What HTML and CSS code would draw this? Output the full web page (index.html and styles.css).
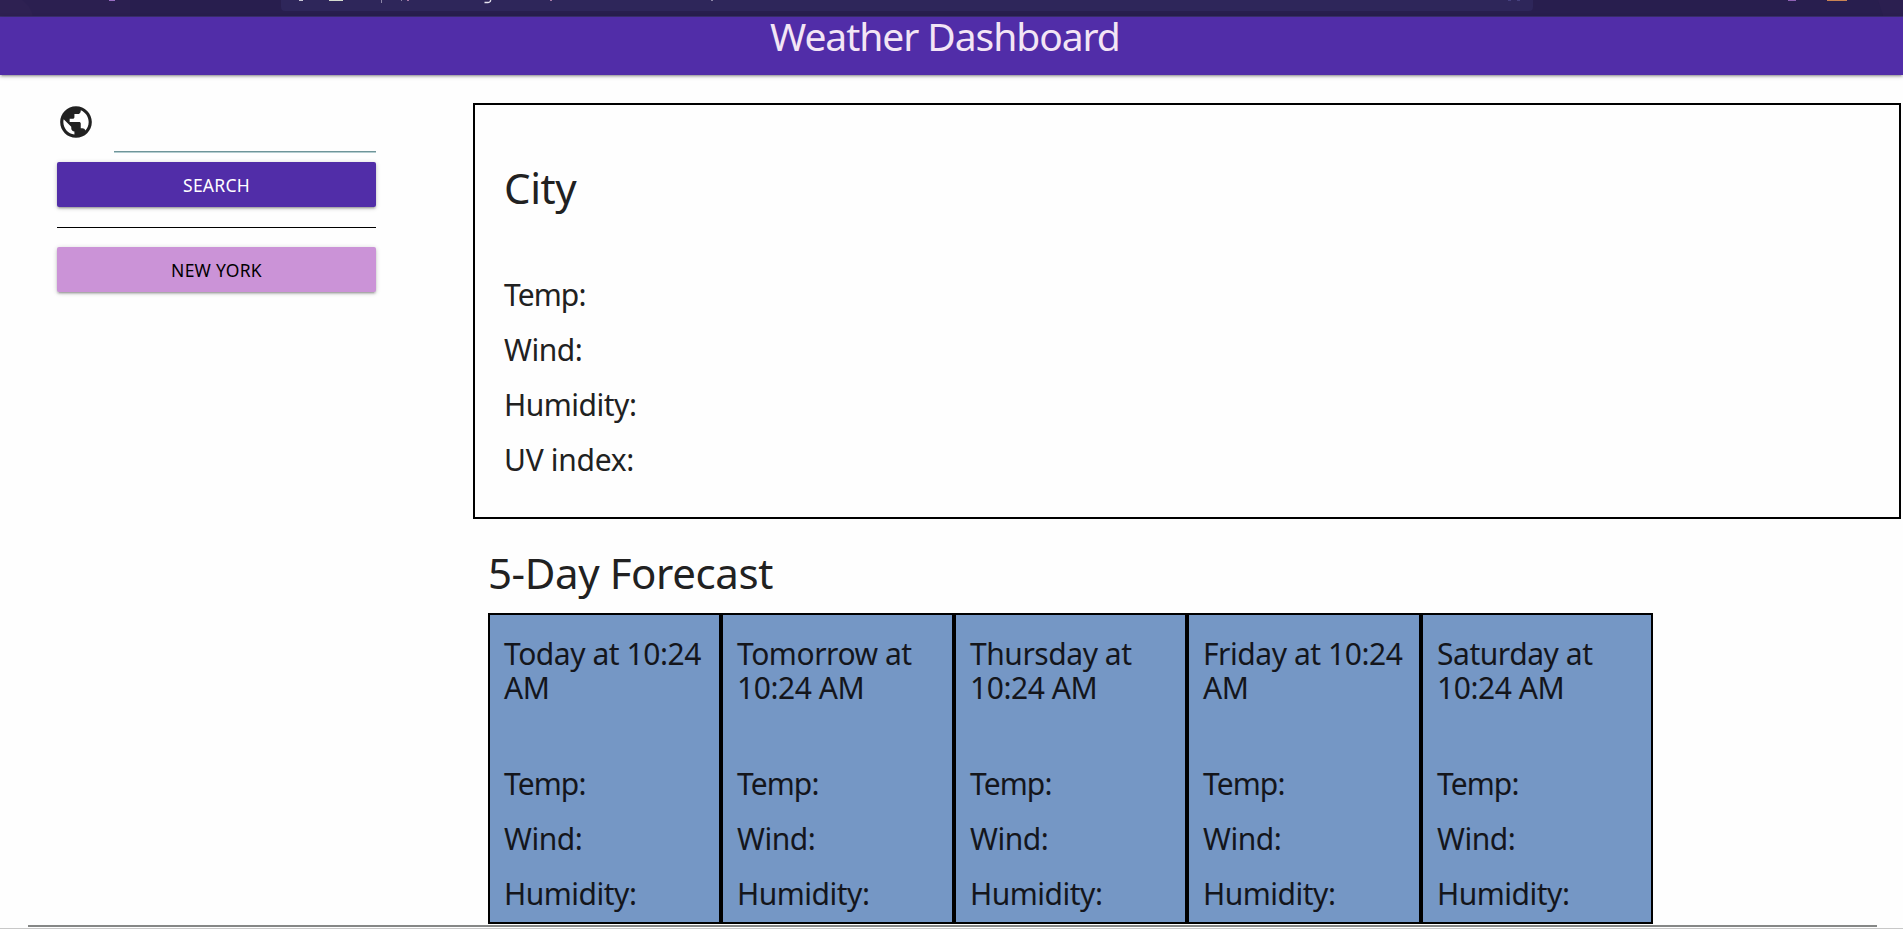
FILE: index.html
```html
<!DOCTYPE html>
<html lang="en">
<head>
<meta charset="utf-8">
<title>Weather Dashboard</title>
<link rel="stylesheet" href="styles.css">
</head>
<body>
<div class="browser">
  <svg class="browser-art" width="1903" height="17" viewBox="0 0 1903 17">
    <rect width="1903" height="17" fill="#281e4e"/>
    <path d="M0 0H130V16H0Z" fill="#2b1f50"/>
    <path d="M0 0H22Q31 6 33 16H0Z" fill="#2e2152"/>
    <path d="M1878 0H1903V16H1883Z" fill="#2b1f50"/>
    <path d="M281 0H1533V7Q1533 11 1529 11H285Q281 11 281 7Z" fill="#2e265a"/>
    <rect y="16" width="1903" height="1" fill="#3b2f70"/>
    <rect x="109" width="6" height="1" fill="#9a6fc4"/>
    <rect x="299" width="4" height="1" fill="#c9c6d6"/>
    <rect x="329" width="14" height="1" fill="#d5dccf"/>
    <rect x="381" width="1" height="3" fill="#8d86a8"/>
    <rect x="401" width="1" height="1" fill="#8d86a8"/>
    <rect x="407" width="2" height="1" fill="#a77aa8"/>
    <path d="M484.500 2.500H488Q491 2 490.500 0" fill="none" stroke="#e6e3ef" stroke-width="1.400"/>
    <rect x="550" width="2" height="1" fill="#a77aa8"/>
    <rect x="711" width="2" height="1" fill="#8d86a8"/>
    <rect x="1508" width="3" height="1" fill="#45407d"/>
    <rect x="1517" width="3" height="1" fill="#45407d"/>
    <rect x="1788" width="8" height="1" fill="#8f62b5"/>
    <rect x="1827" width="20" height="1" fill="#c98354"/>
  </svg>
</div>
<header class="nav"><h1 class="brand">Weather Dashboard</h1></header>
<main class="layout">
  <aside class="sidebar">
    <div class="search-row">
      <svg class="globe" viewBox="0 0 24 24"><path d="M12 2C6.480 2 2 6.480 2 12s4.480 10 10 10 10-4.480 10-10S17.520 2 12 2zm-1 17.930c-3.950-.49-7-3.850-7-7.930 0-.62.080-1.210.21-1.790L9 15v1c0 1.100.9 2 2 2v1.930zm6.900-2.540c-.26-.81-1-1.390-1.900-1.390h-1v-3c0-.55-.45-1-1-1H8v-2h2c.55 0 1-.45 1-1V7h2c1.100 0 2-.9 2-2v-.41c2.930 1.190 5 4.060 5 7.410 0 2.080-.8 3.970-2.100 5.390z"/></svg>
      <input class="search-input" type="text" aria-label="City">
    </div>
    <button class="btn btn-search">SEARCH</button>
    <hr class="divider">
    <button class="btn btn-city">NEW YORK</button>
  </aside>
  <div class="content">
    <section class="current">
      <h2 class="heading city">City</h2>
      <p class="metric temp">Temp:</p>
      <p class="metric wind">Wind:</p>
      <p class="metric humidity">Humidity:</p>
      <p class="metric uv">UV index:</p>
    </section>
    <h2 class="heading forecast-title">5-Day Forecast</h2>
    <section class="forecast">
      <article class="card"><h3 class="day">Today at 10:24 AM</h3><p class="metric temp">Temp:</p><p class="metric wind">Wind:</p><p class="metric humidity">Humidity:</p></article>
      <article class="card"><h3 class="day">Tomorrow at 10:24 AM</h3><p class="metric temp">Temp:</p><p class="metric wind">Wind:</p><p class="metric humidity">Humidity:</p></article>
      <article class="card"><h3 class="day">Thursday at 10:24 AM</h3><p class="metric temp">Temp:</p><p class="metric wind">Wind:</p><p class="metric humidity">Humidity:</p></article>
      <article class="card"><h3 class="day">Friday at 10:24 AM</h3><p class="metric temp">Temp:</p><p class="metric wind">Wind:</p><p class="metric humidity">Humidity:</p></article>
      <article class="card"><h3 class="day">Saturday at 10:24 AM</h3><p class="metric temp">Temp:</p><p class="metric wind">Wind:</p><p class="metric humidity">Humidity:</p></article>
    </section>
  </div>
</main>
<footer class="footer"><hr class="footer-rule"></footer>
</body>
</html>
```

FILE: styles.css
```css
* { box-sizing: border-box; }
body {
  margin: 0;
  height: 929px;
  overflow: hidden;
  display: flex;
  flex-direction: column;
  background: #fefefe;
  color: #212121;
  font-family: "Noto Sans", "Open Sans", sans-serif;
}
h1, h2, h3, p { margin: 0; font-weight: 400; }
.browser { height: 17px; flex: none; }
.browser-art { display: block; }
.nav {
  height: 58px;
  flex: none;
  padding-left: 770px;
  background: #512da8;
  box-shadow: 0 2px 2px 0 rgba(0,0,0,.14), 0 3px 1px -2px rgba(0,0,0,.12), 0 1px 5px 0 rgba(0,0,0,.2);
}
.brand { font-size: 39px; line-height: 38px; letter-spacing: -1.060px; color: #f3e5f5; white-space: nowrap; }
.layout { display: flex; height: 850px; flex: none; padding-top: 28px; }
.sidebar { width: 376px; padding-left: 57px; flex: none; }
.search-row { display: flex; height: 59px; }
.globe { width: 38px; height: 38px; margin: 0 19px 0 0; fill: #212121; }
.search-input { width: 262px; height: 49px; padding: 0; border: 0; border-bottom: 1px solid #6f9599; box-shadow: 0 1px 0 #b4cdd0; background: transparent; outline: 0; }
.btn {
  display: block;
  width: 319px;
  height: 45px;
  padding: 1px 0 0;
  border: 0;
  border-radius: 2px;
  font: 17.500px/44px "Noto Sans", "Open Sans", sans-serif;
  letter-spacing: .25px;
  text-align: center;
  box-shadow: 0 2px 2px 0 rgba(0,0,0,.14), 0 3px 1px -2px rgba(0,0,0,.12), 0 1px 5px 0 rgba(0,0,0,.2);
}
.btn-search { background: #512da8; color: #fff; }
.btn-city { background: #cb93d7; color: #000; }
.divider { height: 1px; margin: 20px 0 19px; border: 0; background: #000; }
.content { margin-left: 97px; width: 1428px; }
.current { height: 416px; border: 2px solid #000; padding: 60px 0 0 29px; }
.heading { font-size: 42px; letter-spacing: -.4px; }
.city { line-height: 45px; margin-bottom: 57px; }
.metric { font-size: 30px; line-height: 55px; letter-spacing: -.5px; }
.temp { letter-spacing: -.9px; }
.uv { letter-spacing: -.3px; }
.forecast-title { line-height: 46px; margin: 31px 0 17px 15px; }
.forecast { display: grid; grid-template-columns: 233px 233px 233px 234px 232px; height: 311px; margin-left: 15px; }
.card { padding: 22px 8px 0 14px; border: 2px solid #000; background: #7597c5; color: #14161c; }
.day { font-size: 30px; line-height: 34px; height: 68px; margin-bottom: 51px; letter-spacing: -.45px; }
.footer { height: 4px; flex: none; padding: 0 26px 0 28px; border-bottom: 1px solid #c8c8c8; }
.footer-rule { height: 2px; margin: 0; border: 0; background: #858786; }
```
